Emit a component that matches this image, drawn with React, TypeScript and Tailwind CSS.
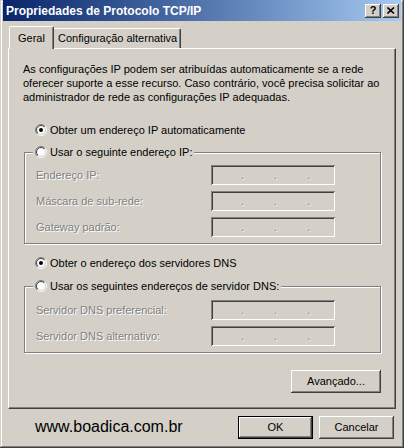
import React, { useId } from 'react';

const raised =
  'shadow-[inset_-1px_-1px_0_#404040,inset_1px_1px_0_#ffffff,inset_-2px_-2px_0_#808080,inset_2px_2px_0_#d4d0c8]';
const sunken =
  'shadow-[inset_1px_1px_0_#808080,inset_-1px_-1px_0_#ffffff,inset_2px_2px_0_#404040,inset_-2px_-2px_0_#d4d0c8]';
const disabledText = 'text-[#808080] [text-shadow:1px_1px_0_#ffffff]';

const Radio = ({ checked }: { checked?: boolean }) => {
  const id = useId().replace(/:/g, '');
  return (
    <svg width="12" height="12" viewBox="0 0 12 12" className="shrink-0">
      <defs>
        <linearGradient id={`o${id}`} x1="0" y1="0" x2="1" y2="1">
          <stop offset="0.5" stopColor="#808080" />
          <stop offset="0.5" stopColor="#ffffff" />
        </linearGradient>
        <linearGradient id={`i${id}`} x1="0" y1="0" x2="1" y2="1">
          <stop offset="0.5" stopColor="#404040" />
          <stop offset="0.5" stopColor="#d4d0c8" />
        </linearGradient>
      </defs>
      <circle cx="6" cy="6" r="5.5" fill="none" stroke={`url(#o${id})`} />
      <circle cx="6" cy="6" r="4.5" fill="#ffffff" stroke={`url(#i${id})`} />
      {checked && <circle cx="6" cy="6" r="2" fill="#000000" />}
    </svg>
  );
};

const IpField = () => (
  <div className={`w-[124px] h-[20px] bg-[#d4d0c8] ${sunken} flex items-center pl-[30px] gap-[30px] text-[11px] ${disabledText}`}>
    <span>.</span>
    <span>.</span>
    <span>.</span>
  </div>
);

const FieldRow = ({ label }: { label: string }) => (
  <div className="flex items-center h-[20px]">
    <span className={`w-[175px] ${disabledText}`}>{label}</span>
    <IpField />
  </div>
);

const Button = ({ label, isDefault, className = '' }: { label: string; isDefault?: boolean; className?: string }) => (
  <button
    className={`h-[23px] bg-[#d4d0c8] flex items-center justify-center text-[11px] ${
      isDefault ? 'border border-black' : ''
    } ${raised} ${className}`}
  >
    {label}
  </button>
);

const TitleButton = ({ children }: { children: React.ReactNode }) => (
  <div className={`w-[16px] h-[14px] bg-[#d4d0c8] ${raised} flex items-center justify-center text-black`}>
    {children}
  </div>
);

export default function App() {
  return (
    <div className="w-[404px] h-[448px] bg-[#d4d0c8] px-[3px] pb-[3px] flex flex-col font-['Liberation_Sans',Arial,sans-serif] text-[11px] text-black shadow-[inset_-1px_-1px_0_#404040,inset_1px_1px_0_#d4d0c8,inset_-2px_-2px_0_#808080,inset_2px_2px_0_#ffffff] overflow-hidden">
      {/* Title bar */}
      <div className="h-[21px] bg-linear-to-r from-[#0a246a] to-[#a6caf0] flex items-center pl-[3px] pr-[2px]">
        <span className="text-white font-bold text-[12px] flex-1">Propriedades de Protocolo TCP/IP</span>
        <div className="flex gap-[2px]">
          <TitleButton>
            <span className="font-bold text-[11px] leading-none">?</span>
          </TitleButton>
          <TitleButton>
            <svg width="8" height="7" viewBox="0 0 8 7">
              <path d="M0.5 0.5L7 6.5M7 0.5L0.5 6.5" stroke="#000" strokeWidth="1.6" />
            </svg>
          </TitleButton>
        </div>
      </div>

      <div className="flex flex-col px-[5px] pt-[5px]">
        {/* Tabs */}
        <div className="flex items-end h-[22px] pl-[1px]">
          <div className="relative z-10 -mb-[1px] w-[45px] h-[23px] bg-[#d4d0c8] border-t border-l border-white border-r border-r-[#404040] rounded-t-[2px] shadow-[inset_-1px_0_0_#808080] flex items-start pt-[3px] pl-[8px]">
            Geral
          </div>
          <div className="w-[127px] h-[20px] bg-[#d4d0c8] border-t border-white border-r border-r-[#404040] rounded-tr-[2px] shadow-[inset_-1px_0_0_#808080] flex items-center pl-[4px]">
            Configuração alternativa
          </div>
        </div>

        {/* Panel */}
        <div className="h-[361px] border-t border-l border-white border-r border-b border-r-[#404040] border-b-[#404040] shadow-[inset_-1px_-1px_0_#808080] px-[14px] pt-[13px] flex flex-col">
          <p className="leading-[14px] w-[366px]">
            As configurações IP podem ser atribuídas automaticamente se a rede oferecer suporte a esse recurso. Caso contrário, você precisa solicitar ao administrador de rede as configurações IP adequadas.
          </p>

          <div className="flex items-center gap-[3px] h-[16px] mt-[18px] ml-[12px]">
            <Radio checked />
            <span>Obter um endereço IP automaticamente</span>
          </div>

          <div className="mt-[14px] ml-[1px] border border-[#808080] shadow-[inset_1px_1px_0_#ffffff,1px_1px_0_#ffffff] pl-[11px] pb-[6px] flex flex-col">
            <div className="-mt-[9px] -ml-[3px] flex items-center gap-[3px] h-[16px] bg-[#d4d0c8] self-start px-[2px]">
              <Radio />
              <span>Usar o seguinte endereço IP:</span>
            </div>
            <div className="flex flex-col gap-[6px] mt-[5px]">
              <FieldRow label="Endereço IP:" />
              <FieldRow label="Máscara de sub-rede:" />
              <FieldRow label="Gateway padrão:" />
            </div>
          </div>

          <div className="flex items-center gap-[3px] h-[16px] mt-[11px] ml-[12px]">
            <Radio checked />
            <span>Obter o endereço dos servidores DNS</span>
          </div>

          <div className="mt-[15px] ml-[1px] border border-[#808080] shadow-[inset_1px_1px_0_#ffffff,1px_1px_0_#ffffff] pl-[11px] pb-[6px] flex flex-col">
            <div className="-mt-[9px] -ml-[3px] flex items-center gap-[3px] h-[16px] bg-[#d4d0c8] self-start px-[2px]">
              <Radio />
              <span>Usar os seguintes endereços de servidor DNS:</span>
            </div>
            <div className="flex flex-col gap-[6px] mt-[6px]">
              <FieldRow label="Servidor DNS preferencial:" />
              <FieldRow label="Servidor DNS alternativo:" />
            </div>
          </div>

          <div className="flex justify-end mt-[17px]">
            <Button label="Avançado..." className="w-[90px]" />
          </div>
        </div>

        {/* Bottom row */}
        <div className="flex items-center mt-[6px]">
          <span className="text-[16px] font-['Liberation_Sans',Arial,sans-serif] ml-[27px] flex-1">www.boadica.com.br</span>
          <Button label="OK" isDefault className="w-[75px]" />
          <Button label="Cancelar" className="w-[75px] ml-[6px] mr-[2px]" />
        </div>
      </div>
    </div>
  );
}
